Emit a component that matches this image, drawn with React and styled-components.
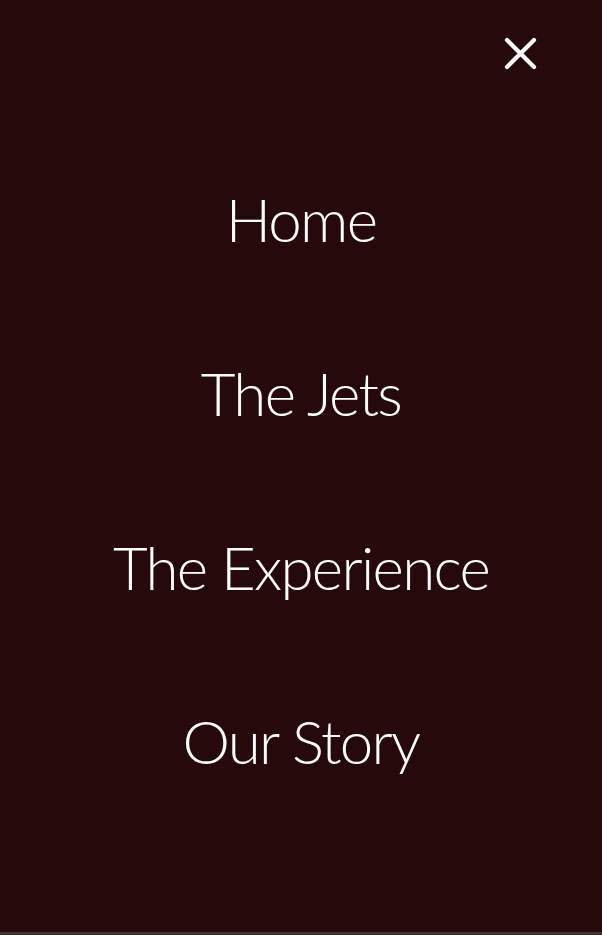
import React from "react";
import styled, { createGlobalStyle } from "styled-components";

const GlobalStyle = createGlobalStyle`
    html, body {
        margin: 0;
        padding: 0;
        background: #3a3232;
    }
    * {
        box-sizing: border-box;
    }
`;

const Overlay = styled.div`
    width: 100%;
    height: 932px;
    background: #260a0b;
    display: flex;
    flex-direction: column;
    font-family: Lato, "Open Sans", sans-serif;
    color: #ffffff;
`;

const TopBar = styled.div`
    display: flex;
    justify-content: flex-end;
    padding: 37px 65px 0 0;
`;

const CloseButton = styled.button`
    width: 33px;
    height: 33px;
    padding: 0;
    border: none;
    background: transparent;
    cursor: pointer;
    display: flex;
    align-items: center;
    justify-content: center;
`;

const Nav = styled.ul`
    list-style: none;
    margin: 62px 0 0;
    padding: 0;
    display: flex;
    flex-direction: column;
`;

const NavItem = styled.li`
    height: 174px;
    display: flex;
    align-items: center;
    justify-content: center;
`;

const NavLink = styled.a`
    font-size: 60px;
    font-weight: 300;
    letter-spacing: -1.7px;
    color: #ffffff;
    text-decoration: none;
    cursor: pointer;
`;

const links = ["Home", "The Jets", "The Experience", "Our Story"];

export default function App() {
    return (
        <>
            <GlobalStyle />
            <Overlay>
                <TopBar>
                    <CloseButton aria-label="Close menu">
                        <svg width="33" height="33" viewBox="0 0 33 33">
                            <path
                                d="M3 3 L30 30 M30 3 L3 30"
                                stroke="#ffffff"
                                strokeWidth="4.2"
                                strokeLinecap="round"
                            />
                        </svg>
                    </CloseButton>
                </TopBar>
                <Nav>
                    {links.map(label => (
                        <NavItem key={label}>
                            <NavLink>{label}</NavLink>
                        </NavItem>
                    ))}
                </Nav>
            </Overlay>
        </>
    );
}
